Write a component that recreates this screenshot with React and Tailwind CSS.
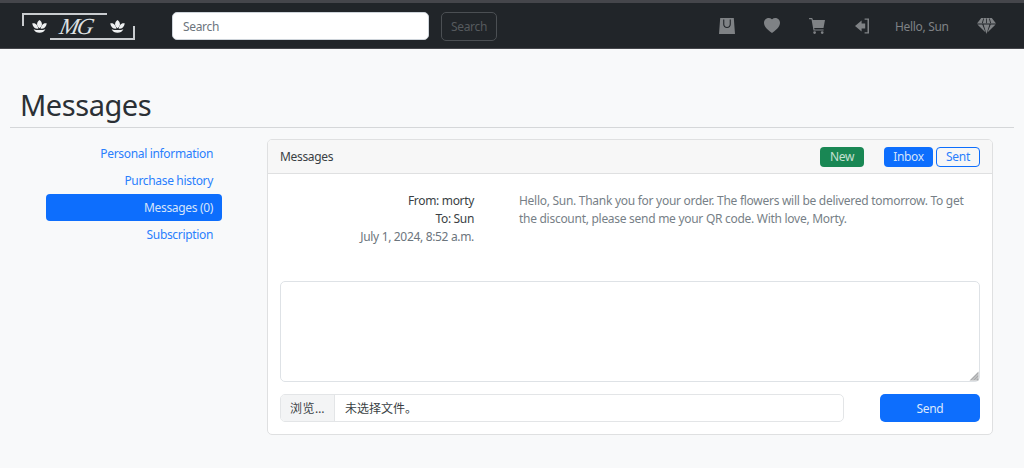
import React from "react";

const Bag = () => (
  <svg width="16" height="16" viewBox="0 0 16 16" fill="#7f8285">
    <path fillRule="evenodd" d="M1.2 0h13.6L16 16H0z M4.2 1.6v4.6c0 2.2 1.6 3.7 3.8 3.7s3.8-1.5 3.8-3.7V1.6h-1.1v4.6c0 1.6-1.1 2.7-2.7 2.7s-2.7-1.1-2.7-2.7V1.6z" />
  </svg>
);
const Heart = () => (
  <svg width="16" height="16" viewBox="0 0 16 16" fill="#7f8285">
    <path d="M8 15C-7.333 4.868 3.279-3.04 7.824 1.143c.06.055.119.112.176.171a3.12 3.12 0 0 1 .176-.17C12.72-3.042 23.333 4.867 8 15z" />
  </svg>
);
const Cart = () => (
  <svg width="16" height="16" viewBox="0 0 16 16" fill="#7f8285">
    <path d="M0 .6A.5.5 0 0 1 .5 0H3a.5.5 0 0 1 .48.38L3.9 2H16l-1.5 8H5.2l.3 1.4H14.6v1.2H4.5L2.5 1.2H.5a.5.5 0 0 1-.5-.6zM5.6 13.2a1.4 1.4 0 1 0 0 2.8 1.4 1.4 0 0 0 0-2.8zm7.6 0a1.4 1.4 0 1 0 0 2.8 1.4 1.4 0 0 0 0-2.8z" />
  </svg>
);
const Login = () => (
  <svg width="14" height="16" viewBox="0 0 14 16" fill="#7f8285">
    <path d="M6.6 2.6 0 8l6.6 5.4V10.4h3.6V5.6H6.6z" />
    <path d="M9.6 .4H14v15.2H9.6v-1.3h2.9V1.7H9.6z" />
  </svg>
);
const Gem = () => (
  <svg width="19" height="16" viewBox="0 0 19 16" fill="#7f8285">
    <path d="M4.2 0h10.6L19 5.4H0z" />
    <path d="M.4 6.4h4.9l3.3 8.2z" />
    <path d="M6.5 6.4h6L9.5 16z" />
    <path d="M13.7 6.4h4.9l-8.2 8.2z" />
    <path d="M6.2 .6 4.9 5.2h.9L7 .6zM12 .6l1.2 4.6h.9L12.8 .6zM9.1 .6v4.6h.8V.6z" fill="#212529" />
  </svg>
);
const Lotus = () => (
  <svg width="15" height="13" viewBox="0 0 15 13" fill="#eef0f1">
    <path d="M7.5 0C9.2 1.2 10 2.8 9.9 4.4 9.7 6 8.7 7.3 7.5 8.2 6.3 7.3 5.3 6 5.1 4.4 5 2.8 5.8 1.2 7.5 0z" />
    <path d="M.2 3.4c2-.4 3.6.1 4.6 1.5.8 1.1 1.3 2.4 1.7 3.7C3.4 9 .9 7.2.2 3.4zM14.8 3.4c-2-.4-3.6.1-4.6 1.5-.8 1.1-1.3 2.4-1.7 3.7 3.1.4 5.6-1.4 6.3-5.2z" />
    <path d="M1.6 9.2c2 .8 4 .9 5.9.8 1.9.1 3.9 0 5.9-.8-1 2.4-3.4 3.6-5.9 3.6s-4.9-1.2-5.9-3.6z" />
  </svg>
);
const Grip = () => (
  <svg width="10" height="10" viewBox="0 0 10 10" className="absolute right-[1px] bottom-[1px]">
    <path d="M9.5 .5 .5 9.5h9z" fill="#a9abad" />
    <path d="M3 9.5 9.5 3M6 9.5 9.5 6" stroke="#e8e8e8" strokeWidth="0.7" />
  </svg>
);

const Logo = () => (
  <div className="relative w-[113px] h-[27px] ml-[22px] shrink-0">
    <div className="absolute left-0 top-0 w-[85px] h-[13px] border-l-2 border-t-2 border-[#c9cccf]" />
    <div className="absolute right-0 bottom-0 w-[85px] h-[14px] border-r-2 border-b-2 border-[#c9cccf]" />
    <div className="absolute left-[10px] top-[7px]"><Lotus /></div>
    <div className="absolute right-[10px] top-[7px]"><Lotus /></div>
    <div className="absolute left-[38px] top-[2px] text-[#dfe2e4] text-[23px] leading-[24px] italic tracking-[-2px] -skew-x-12 font-['Liberation_Serif',serif]">MG</div>
  </div>
);

const Side = ({ children, active }) => (
  <a className={
    "block h-[27px] pr-[9px] text-right leading-[27px] rounded-[4px] " +
    (active ? "bg-[#0d6efd] text-[#d5e4fb]" : "text-[#2a7ffd]")
  }>{children}</a>
);

export default function App() {
  return (
    <div className="min-h-[468px] bg-[#f8f9fa] text-[12px] tracking-[-0.33px] text-[#212529] font-['Noto_Sans','Noto_Sans_CJK_SC',sans-serif]">
      <div className="h-[3px] bg-[#45464b]" />
      <nav className="h-[46px] bg-[#212529] border-b border-[#45464b] flex items-center pt-[1px]">
        <Logo />
        <div className="ml-[37px] w-[257px] h-[28px] rounded-[5px] bg-white border border-[#ced4da] pl-[10px] pt-[1px] flex items-center text-[#6c757d]">Search</div>
        <div className="ml-[12px] w-[56px] h-[29px] rounded-[5px] border border-[#4b4f53] pt-[1px] flex items-center justify-center text-[#565a5e]">Search</div>
        <div className="ml-auto flex items-center text-[#7f8285]">
          <Bag />
          <div className="ml-[29px]"><Heart /></div>
          <div className="ml-[29px]"><Cart /></div>
          <div className="ml-[30px]"><Login /></div>
          <span className="ml-[26px] w-[55px] pt-[1px] whitespace-nowrap">Hello, Sun</span>
          <div className="ml-[27px] mr-[28px]"><Gem /></div>
        </div>
      </nav>

      <div className="px-[10px]">
        <h1 className="pt-[38px] pl-[10px] h-[79px] border-b border-[#d5d7d9] text-[29px] tracking-[-0.45px] leading-[36px] font-normal text-[#2b3035]">Messages</h1>
      </div>

      <div className="flex items-start pt-[11px]">
        <div className="ml-[46px] w-[176px] pt-[1px]">
          <Side>Personal information</Side>
          <Side>Purchase history</Side>
          <Side active>Messages (0)</Side>
          <Side>Subscription</Side>
        </div>
        <div className="ml-[45px] w-[726px] h-[296px] bg-white border border-[#dfe0e1] rounded-[5px] overflow-hidden">
          <div className="h-[34px] bg-[#f7f7f7] border-b border-[#dfe0e1] flex items-center pl-[12px]">
            <span className="text-[#3a3f44]">Messages</span>
            <div className="ml-auto mr-[12px] flex items-center">
              <div className="w-[44px] h-[20px] rounded-[4px] bg-[#198754] text-[#c5e0d2] flex items-center justify-center">New</div>
              <div className="ml-[20px] w-[49px] h-[20px] rounded-[4px] bg-[#0d6efd] text-[#d5e4fb] flex items-center justify-center">Inbox</div>
              <div className="ml-[3px] w-[44px] h-[20px] rounded-[4px] border border-[#0d6efd] text-[#2a7ffd] flex items-center justify-center">Sent</div>
            </div>
          </div>
          <div className="px-[12px]">
            <div className="flex h-[107px] pt-[18px]">
              <div className="w-[194px] text-right leading-[18px]">
                <div className="text-[#3a3f44]">From: morty</div>
                <div className="text-[#3a3f44]">To: Sun</div>
                <div className="text-[#6c757d]">July 1, 2024, 8:52 a.m.</div>
              </div>
              <div className="ml-[45px] w-[450px] leading-[18px] tracking-[-0.28px] text-[#777f87]">
                Hello, Sun. Thank you for your order. The flowers will be delivered tomorrow. To get the discount, please send me your QR code. With love, Morty.
              </div>
            </div>
            <div className="relative">
              <textarea readOnly className="block w-full h-[101px] bg-white border border-[#dee2e6] rounded-[5px] outline-none resize-none" />
              <Grip />
            </div>
            <div className="mt-[12px] flex items-start justify-between">
              <div className="w-[564px] h-[28px] border border-[#e3e5e7] rounded-[5px] flex items-center overflow-hidden tracking-normal">
                <div className="w-[54px] h-full bg-[#f3f4f5] border-r border-[#e3e5e7] pt-[1px] flex items-center justify-center tracking-[0.5px] text-[#3a3f44]">浏览…</div>
                <span className="ml-[10px] pt-[1px] text-[#3a3f44]">未选择文件。</span>
              </div>
              <div className="w-[100px] h-[28px] rounded-[5px] bg-[#0d6efd] pt-[1px] text-[#dce8fc] flex items-center justify-center">Send</div>
            </div>
          </div>
        </div>
      </div>
    </div>
  );
}
